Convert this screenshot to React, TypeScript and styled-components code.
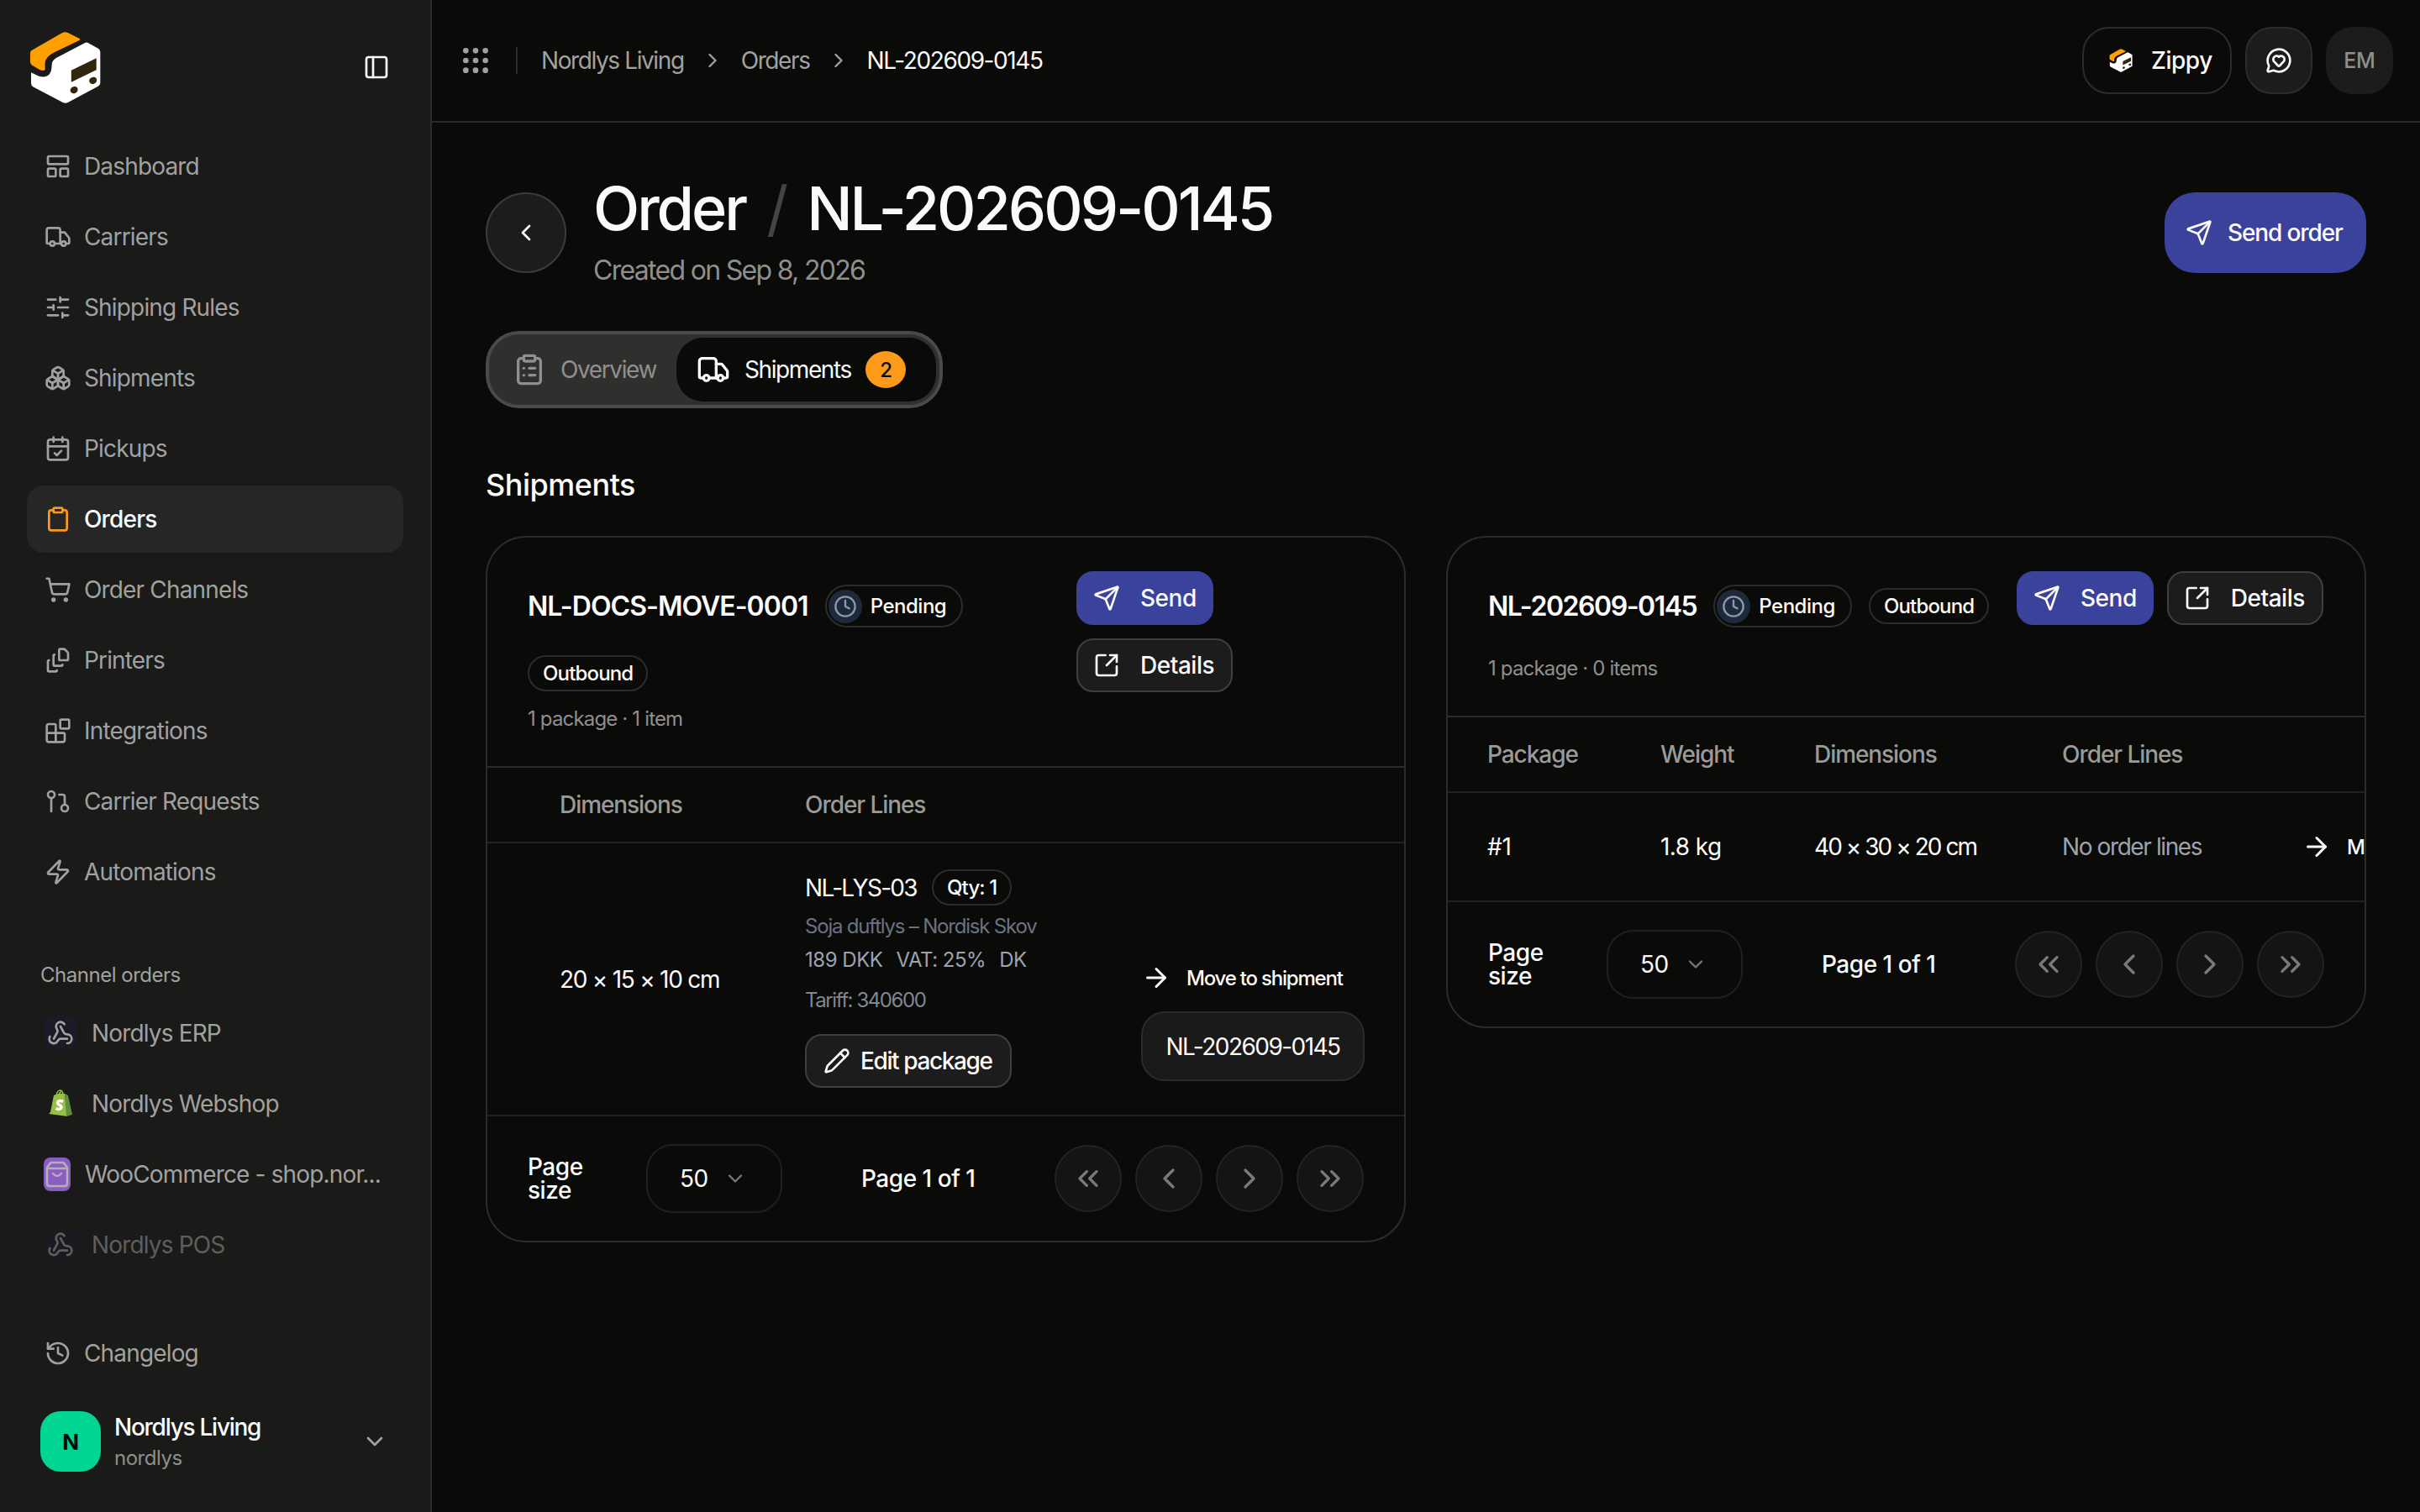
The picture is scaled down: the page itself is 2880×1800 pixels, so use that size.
import React from "react";
import styled, { createGlobalStyle } from "styled-components";
import {
  ArrowRight,
  Blocks,
  Boxes,
  CalendarCheck,
  ChevronDown,
  ChevronLeft,
  ChevronRight,
  ChevronsLeft,
  ChevronsRight,
  Clipboard,
  ClipboardList,
  Clock,
  FileStack,
  GitPullRequest,
  Grip,
  History,
  LayoutPanelTop,
  MessageCircleHeart,
  PanelLeft,
  Pencil,
  Send,
  ShoppingCart,
  SlidersHorizontal,
  SquareArrowOutUpRight,
  Truck,
  Webhook,
  Zap,
} from "lucide-react";

const GlobalStyle = createGlobalStyle`
  * { box-sizing: border-box; }
  html, body { margin: 0; padding: 0; background: #0a0a09; }
  body {
    font-family: Inter, "Liberation Sans", sans-serif;
    letter-spacing: -0.03em;
    color: #fafafa;
    overflow: hidden;
  }
`;

const Shell = styled.div`
  display: flex;
  width: 2880px;
  height: 1800px;
  background: #0a0a09;
`;

/* sidebar */
const Sidebar = styled.aside`
  width: 514px;
  flex: none;
  height: 100%;
  display: flex;
  flex-direction: column;
  background: #1a1a18;
  border-right: 2px solid #2c2c2a;
  padding: 0 32px 48px;
`;

const Brand = styled.div`
  height: 158px;
  display: flex;
  align-items: flex-start;
  justify-content: space-between;
  padding: 37px 16px 0 3px;
  color: #fafafa;
`;

const ToggleWrap = styled.div`
  margin-top: 27px;
  display: flex;
`;

const NavList = styled.nav`
  display: flex;
  flex-direction: column;
  gap: 4px;
`;

const NavItem = styled.div<{ $active?: boolean; $dim?: boolean }>`
  height: 80px;
  display: flex;
  align-items: center;
  gap: 15px;
  padding: 0 20px 0 21px;
  border-radius: 20px;
  font-size: 28px;
  letter-spacing: -0.03em;
  font-weight: ${(p) => (p.$active ? 500 : 400)};
  color: ${(p) => (p.$active ? "#fafafa" : "#a1a1a0")};
  background: ${(p) => (p.$active ? "#262626" : "transparent")};
  opacity: ${(p) => (p.$dim ? 0.5 : 1)};
  white-space: nowrap;
  svg {
    flex: none;
    color: ${(p) => (p.$active ? "#fd9a1a" : "#a1a1a0")};
  }
`;

const ChannelLabel = styled.div`
  margin: 67px 0 13px 16px;
  font-size: 24px;
  line-height: 32px;
  color: #a1a1a0;
`;

const ChannelIcon = styled.span<{ $wide?: boolean }>`
  width: ${(p) => (p.$wide ? 32 : 40)}px;
  height: 40px;
  flex: none;
  display: flex;
  align-items: center;
  justify-content: center;
  border-radius: 10px;
  background: #1b1b28;
`;

const PlainIcon = styled(ChannelIcon)`
  background: transparent;
`;

const ChannelRow = styled(NavItem)`
  padding: 0 20px;
  gap: 17px;
`;

const Ellipsis = styled.span`
  overflow: hidden;
  text-overflow: ellipsis;
`;

const SideBottom = styled.div`
  margin-top: auto;
  display: flex;
  flex-direction: column;
  gap: 29px;
`;

const Account = styled.div`
  display: flex;
  align-items: center;
  padding: 0 16px;
`;

const Avatar = styled.div`
  width: 72px;
  height: 72px;
  flex: none;
  border-radius: 24px;
  background: #00d492;
  color: #0a0a09;
  display: flex;
  align-items: center;
  justify-content: center;
  font-size: 26px;
  font-weight: 700;
`;

const AccountText = styled.div`
  margin-left: 16px;
  flex: 1;
  display: flex;
  flex-direction: column;
  gap: 3px;
`;

const AccountName = styled.div`
  font-size: 28px;
  line-height: 36px;
  font-weight: 500;
  letter-spacing: -0.045em;
`;

const AccountHandle = styled.div`
  font-size: 24px;
  line-height: 32px;
  color: #8f8f8d;
`;

const AccountChevron = styled.div`
  display: flex;
  margin-right: 2px;
  color: #a1a1a0;
`;

/* top bar */
const Content = styled.div`
  flex: 1;
  min-width: 0;
  display: flex;
  flex-direction: column;
`;

const TopBar = styled.header`
  height: 146px;
  flex: none;
  display: flex;
  align-items: center;
  border-bottom: 2px solid #2c2c2a;
  padding: 0 32px;
`;

const GripWrap = styled.div`
  display: flex;
  color: #a1a1a0;
`;

const Divider = styled.div`
  width: 2px;
  height: 32px;
  margin: 0 28px;
  background: #2c2c2a;
`;

const Crumb = styled.span<{ $current?: boolean }>`
  font-size: 28px;
  letter-spacing: -0.05em;
  color: ${(p) => (p.$current ? "#fafafa" : "#a1a1a0")};
`;

const CrumbSep = styled.span`
  display: flex;
  margin: 0 20px;
  color: #a1a1a0;
`;

const TopActions = styled.div`
  margin-left: auto;
  display: flex;
  gap: 16px;
  align-items: center;
`;

const ZippyButton = styled.div`
  width: 178px;
  height: 80px;
  display: flex;
  align-items: center;
  gap: 22px;
  padding-left: 30px;
  border-radius: 32px;
  border: 2px solid #2c2c2a;
  font-size: 28px;
  font-weight: 500;
`;

const SquareButton = styled.div<{ $muted?: boolean }>`
  width: 80px;
  height: 80px;
  display: flex;
  align-items: center;
  justify-content: center;
  border-radius: 32px;
  background: #1c1c1c;
  border: 2px solid ${(p) => (p.$muted ? "#1c1c1c" : "#2c2c2a")};
  font-size: 25px;
  font-weight: 500;
  letter-spacing: -0.01em;
  color: ${(p) => (p.$muted ? "#8f8f8d" : "#fafafa")};
`;

/* page */
const Main = styled.main`
  padding: 62px 64px 0;
`;

const PageHead = styled.div`
  display: flex;
  align-items: center;
`;

const BackButton = styled.div`
  width: 96px;
  height: 96px;
  flex: none;
  display: flex;
  align-items: center;
  justify-content: center;
  border-radius: 50%;
  background: #1c1c1a;
  border: 2px solid #3c3c3a;
  color: #fafafa;
`;

const TitleBlock = styled.div`
  margin-left: 32px;
  flex: 1;
`;

const Title = styled.h1`
  margin: 0;
  display: flex;
  align-items: center;
  font-size: 72px;
  line-height: 80px;
  font-weight: 500;
  letter-spacing: -0.042em;
`;

const Slash = styled.span`
  margin: 0 25px;
  font-weight: 400;
  color: #444442;
`;

const Created = styled.div`
  margin-top: 10px;
  font-size: 32px;
  line-height: 48px;
  letter-spacing: -0.053em;
  color: #8f8f8d;
`;

const PrimaryLarge = styled.div`
  width: 240px;
  height: 96px;
  display: flex;
  align-items: center;
  gap: 18px;
  padding-left: 25px;
  border-radius: 36px;
  background: #3b429c;
  font-size: 28px;
  font-weight: 500;
  letter-spacing: -0.04em;
`;

const Tabs = styled.div`
  margin-top: 48px;
  width: 544px;
  height: 92px;
  display: flex;
  padding: 4px;
  border-radius: 40px;
  border: 4px solid #4a4a48;
  background: #2f2f2e;
`;

const Tab = styled.div<{ $active?: boolean }>`
  display: flex;
  align-items: center;
  gap: 17px;
  padding: 0 24px;
  border-radius: 32px;
  font-size: 28px;
  letter-spacing: -0.05em;
  flex: ${(p) => (p.$active ? 1 : "none")};
  background: ${(p) => (p.$active ? "#0a0a09" : "transparent")};
  color: ${(p) => (p.$active ? "#fafafa" : "#8f8f8d")};
  font-weight: 400;
`;

const TabCount = styled.span`
  width: 48px;
  height: 44px;
  display: flex;
  align-items: center;
  justify-content: center;
  border-radius: 50%;
  background: #fd9a1a;
  color: #0a0a09;
  font-size: 24px;
  font-weight: 500;
`;

const SectionTitle = styled.h2`
  margin: 67px 0 37px;
  font-size: 36px;
  line-height: 48px;
  font-weight: 500;
`;

const CardGrid = styled.div`
  display: grid;
  grid-template-columns: 1fr 1fr;
  gap: 48px;
  align-items: start;
`;

const Card = styled.section`
  min-width: 0;
  border: 2px solid #2c2c2a;
  border-radius: 48px;
  overflow: hidden;
`;

const CardHead = styled.div`
  display: flex;
  gap: 24px;
  padding: 40px 48px;
  border-bottom: 2px solid #2c2c2a;
`;

const CardInfo = styled.div`
  flex: 1;
  min-width: 0;
  padding-top: 16px;
`;

const InfoRow = styled.div`
  display: flex;
  flex-wrap: wrap;
  align-items: center;
  gap: 33px 20px;
`;

const CardTitle = styled.div<{ $tight?: boolean }>`
  font-size: 32px;
  font-weight: 600;
  letter-spacing: ${(p) => (p.$tight ? "-0.046em" : "-0.03em")};
`;

const StatusPill = styled.span`
  height: 51px;
  display: flex;
  align-items: center;
  gap: 10px;
  padding: 0 18px 0 2px;
  border: 2px solid #2c2c2a;
  border-radius: 26px;
  font-size: 24px;
  font-weight: 500;
`;

const StatusDot = styled.span`
  width: 40px;
  height: 40px;
  display: flex;
  align-items: center;
  justify-content: center;
  border-radius: 50%;
  background: #1e2a3a;
  color: #8a9bb0;
`;

const Pill = styled.span`
  height: 43px;
  display: flex;
  align-items: center;
  padding: 0 16px;
  border: 2px solid #2c2c2a;
  border-radius: 22px;
  font-size: 24px;
  font-weight: 500;
  letter-spacing: -0.035em;
`;

const CardMeta = styled.div<{ $top: number }>`
  margin-top: ${(p) => p.$top}px;
  font-size: 24px;
  line-height: 32px;
  letter-spacing: -0.035em;
  color: #8f8f8d;
`;

const CardActions = styled.div<{ $width: number }>`
  width: ${(p) => p.$width}px;
  flex: none;
  display: flex;
  flex-wrap: wrap;
  align-content: flex-start;
  gap: 16px;
`;

const ActionButton = styled.div<{ $primary?: boolean }>`
  height: 64px;
  display: flex;
  align-items: center;
  gap: 24px;
  padding: 0 ${(p) => (p.$primary ? 18 : 20)}px 0 18px;
  border-radius: 20px;
  font-size: 28px;
  font-weight: 500;
  background: ${(p) => (p.$primary ? "#3b429c" : "#1c1c1c")};
  border: 2px solid ${(p) => (p.$primary ? "#3b429c" : "#3f3f3d")};
`;

const TableRow = styled.div<{ $cols: string; $pad: number; $height?: number }>`
  display: grid;
  grid-template-columns: ${(p) => p.$cols};
  padding-left: ${(p) => p.$pad}px;
  height: ${(p) => (p.$height ? `${p.$height}px` : "auto")};
  align-items: center;
  overflow: hidden;
  font-size: 28px;
  border-bottom: 2px solid #222220;
  white-space: nowrap;
`;

const HeadCell = styled.div`
  color: #9a9a98;
  font-weight: 500;
  letter-spacing: -0.038em;
`;

const TextCell = styled.div<{ $spacing: number }>`
  letter-spacing: ${(p) => p.$spacing}em;
`;

const NoLines = styled.div`
  color: #9ca3af;
  letter-spacing: -0.05em;
`;

const OrderCell = styled.div`
  padding: 31px 0 32px;
  display: flex;
  flex-direction: column;
  align-items: flex-start;
`;

const LineHead = styled.div`
  display: flex;
  align-items: center;
  gap: 18px;
  letter-spacing: -0.06em;
`;

const LineName = styled.div`
  margin-top: 9px;
  font-size: 24px;
  line-height: 32px;
  letter-spacing: -0.05em;
  color: #6b7280;
`;

const LinePrice = styled.div`
  margin-top: 8px;
  display: flex;
  gap: 16px;
  font-size: 24px;
  line-height: 32px;
  color: #9ca3af;
`;

const LineTariff = styled.div`
  margin-top: 16px;
  font-size: 24px;
  line-height: 32px;
  letter-spacing: -0.06em;
  color: #7f8794;
`;

const EditButton = styled.div`
  margin-top: 24px;
  height: 64px;
  display: flex;
  align-items: center;
  gap: 12px;
  padding: 0 22px 0 20px;
  border-radius: 20px;
  background: #1c1c1c;
  border: 2px solid #3f3f3d;
  font-weight: 500;
  letter-spacing: -0.05em;
`;

const MoveCell = styled.div<{ $top?: number }>`
  align-self: ${(p) => (p.$top ? "start" : "center")};
  padding-top: ${(p) => p.$top ?? 0}px;
  display: flex;
  flex-direction: column;
  gap: 24px;
`;

const MoveLabel = styled.div`
  height: 32px;
  display: flex;
  align-items: center;
  gap: 18px;
  font-size: 24px;
  font-weight: 500;
  letter-spacing: -0.05em;
`;

const MoveTarget = styled.div`
  width: 266px;
  height: 83px;
  display: flex;
  align-items: center;
  justify-content: center;
  border-radius: 28px;
  background: #1a1a1a;
  border: 2px solid #2c2c2a;
  font-size: 28px;
  letter-spacing: -0.055em;
`;

const CardFoot = styled.div`
  display: flex;
  align-items: center;
  padding: 33px 48px;
  font-size: 28px;
`;

const PageSizeLabel = styled.div`
  width: 70px;
  margin-right: 71px;
  flex: none;
  line-height: 28px;
  font-weight: 500;
`;

const SizeSelect = styled.div`
  width: 162px;
  height: 82px;
  flex: none;
  display: flex;
  align-items: center;
  gap: 18px;
  padding-left: 38px;
  border-radius: 32px;
  border: 2px solid #1f1f1f;
  color: #fafafa;
  svg {
    color: #777775;
  }
`;

const PageLabel = styled.div`
  width: 136px;
  margin: 0 94px;
  flex: none;
  font-weight: 500;
  white-space: nowrap;
`;

const PagerGroup = styled.div`
  display: flex;
  gap: 16px;
`;

const PagerButton = styled.div`
  width: 80px;
  height: 80px;
  display: flex;
  align-items: center;
  justify-content: center;
  border-radius: 50%;
  background: #141414;
  border: 2px solid #232323;
  color: #7a7a78;
`;

const ICON = { size: 32, strokeWidth: 2 };
const PAGER_ICON = { size: 40, strokeWidth: 2 };

const NAV = [
  { label: "Dashboard", Icon: LayoutPanelTop },
  { label: "Carriers", Icon: Truck },
  { label: "Shipping Rules", Icon: SlidersHorizontal },
  { label: "Shipments", Icon: Boxes },
  { label: "Pickups", Icon: CalendarCheck },
  { label: "Orders", Icon: Clipboard, active: true },
  { label: "Order Channels", Icon: ShoppingCart },
  { label: "Printers", Icon: FileStack },
  { label: "Integrations", Icon: Blocks },
  { label: "Carrier Requests", Icon: GitPullRequest },
  { label: "Automations", Icon: Zap },
];

const Logo = ({ width, height }: { width: number; height: number }) => (
  <svg width={width} height={height} viewBox="52 50 256 260" aria-hidden>
    <path
      d="M60 118 L170 55 Q180 50 190 55 L232 76 Q236 79 231 82 L140 126 Q108 142 108 165 L108 188 Q100 193 90 188 L62 172 Q55 168 55 160 L55 128 Q55 121 60 118 Z"
      fill="#ffa000"
    />
    <path
      d="M250 92 Q256 88 262 91 L300 112 Q306 116 306 125 L306 235 Q306 243 298 247 L190 305 Q181 310 172 305 L66 249 Q58 245 58 236 L58 197 L86 211 Q132 222 132 172 Q132 154 148 145 Z"
      fill="#ffffff"
    />
    <path d="M202 190 L292 146 L292 188 L202 232 Z" fill="#33260f" />
    <ellipse cx="212" cy="260" rx="14" ry="12" transform="rotate(-25 212 260)" fill="#33260f" />
    <ellipse cx="280" cy="226" rx="14" ry="12" transform="rotate(-25 280 226)" fill="#33260f" />
  </svg>
);

const ShopifyMark = () => (
  <svg width="30" height="34" viewBox="0 0 30 34" aria-hidden>
    <path d="M3 27 L7 7 Q13 4 20 5 L23 32 L1 29 Z" fill="#95bf47" />
    <path d="M20 5 L24 7 L29 30 L22 32 Z" fill="#5e8e3e" />
    <path d="M10 7 Q11 1 15 1 Q18 2 18 6 M13 6 Q14 3 16 3" fill="none" stroke="#95bf47" strokeWidth="1.4" />
    <path
      d="M18 14.5 Q14 12.5 12 14.5 Q10.5 17 14 18.5 Q17 20 15.5 22.5 Q13 24.5 9.5 22.5"
      fill="none"
      stroke="#fff"
      strokeWidth="3.4"
    />
  </svg>
);

const WooMark = () => (
  <svg width="32" height="40" viewBox="0 0 32 40" aria-hidden>
    <rect width="32" height="40" rx="8" fill="#8c5cc4" />
    <g fill="none" stroke="#b2b0b4" strokeWidth="2.6" strokeLinecap="round" strokeLinejoin="round">
      <path d="M8.5 6 H23.5 L28 12 V31 Q28 34 25 34 H7 Q4 34 4 31 V12 Z" />
      <path d="M4 13 H28" />
      <path d="M11 19 Q16 25 21 19" />
    </g>
  </svg>
);

const Pager = () => (
  <PagerGroup>
    <PagerButton><ChevronsLeft {...PAGER_ICON} /></PagerButton>
    <PagerButton><ChevronLeft {...PAGER_ICON} /></PagerButton>
    <PagerButton><ChevronRight {...PAGER_ICON} /></PagerButton>
    <PagerButton><ChevronsRight {...PAGER_ICON} /></PagerButton>
  </PagerGroup>
);

const Footer = () => (
  <CardFoot>
    <PageSizeLabel>Page size</PageSizeLabel>
    <SizeSelect>
      50
      <ChevronDown size={28} strokeWidth={2} />
    </SizeSelect>
    <PageLabel>Page 1 of 1</PageLabel>
    <Pager />
  </CardFoot>
);

const Actions = ({ width }: { width: number }) => (
  <CardActions $width={width}>
    <ActionButton $primary>
      <Send {...ICON} />
      Send
    </ActionButton>
    <ActionButton>
      <SquareArrowOutUpRight {...ICON} />
      Details
    </ActionButton>
  </CardActions>
);

const Status = () => (
  <StatusPill>
    <StatusDot><Clock size={28} strokeWidth={2} /></StatusDot>
    Pending
  </StatusPill>
);

const Move = ({ top, children }: { top?: number; children?: React.ReactNode }) => (
  <MoveCell $top={top}>
    <MoveLabel>
      <ArrowRight size={36} strokeWidth={2} />
      Move to shipment
    </MoveLabel>
    {children}
  </MoveCell>
);

const App = () => {
  const firstCols = "292px 400px 266px";
  const secondCols = "206px 183px 295px 285px 400px";
  return (
    <Shell>
      <GlobalStyle />
      <Sidebar>
        <Brand>
          <Logo width={85} height={87} />
          <ToggleWrap><PanelLeft {...ICON} /></ToggleWrap>
        </Brand>
        <NavList>
          {NAV.map(({ label, Icon, active }) => (
            <NavItem key={label} $active={active}>
              <Icon {...ICON} />
              {label}
            </NavItem>
          ))}
        </NavList>
        <ChannelLabel>Channel orders</ChannelLabel>
        <NavList>
          <ChannelRow><ChannelIcon><Webhook {...ICON} /></ChannelIcon>Nordlys ERP</ChannelRow>
          <ChannelRow><PlainIcon><ShopifyMark /></PlainIcon>Nordlys Webshop</ChannelRow>
          <ChannelRow><PlainIcon $wide><WooMark /></PlainIcon><Ellipsis>WooCommerce - shop.nor...</Ellipsis></ChannelRow>
          <ChannelRow $dim><ChannelIcon><Webhook {...ICON} /></ChannelIcon>Nordlys POS</ChannelRow>
        </NavList>
        <SideBottom>
          <NavItem><History {...ICON} />Changelog</NavItem>
          <Account>
            <Avatar>N</Avatar>
            <AccountText>
              <AccountName>Nordlys Living</AccountName>
              <AccountHandle>nordlys</AccountHandle>
            </AccountText>
            <AccountChevron><ChevronDown size={32} strokeWidth={2} /></AccountChevron>
          </Account>
        </SideBottom>
      </Sidebar>
      <Content>
        <TopBar>
          <GripWrap><Grip size={40} strokeWidth={2} /></GripWrap>
          <Divider />
          <Crumb>Nordlys Living</Crumb>
          <CrumbSep><ChevronRight size={28} strokeWidth={2} /></CrumbSep>
          <Crumb>Orders</Crumb>
          <CrumbSep><ChevronRight size={28} strokeWidth={2} /></CrumbSep>
          <Crumb $current>NL-202609-0145</Crumb>
          <TopActions>
            <ZippyButton>
              <Logo width={28} height={28} />
              Zippy
            </ZippyButton>
            <SquareButton><MessageCircleHeart {...ICON} /></SquareButton>
            <SquareButton $muted>EM</SquareButton>
          </TopActions>
        </TopBar>
        <Main>
          <PageHead>
            <BackButton><ChevronLeft {...ICON} /></BackButton>
            <TitleBlock>
              <Title>
                Order
                <Slash>/</Slash>
                NL-202609-0145
              </Title>
              <Created>Created on Sep 8, 2026</Created>
            </TitleBlock>
            <PrimaryLarge>
              <Send {...ICON} />
              Send order
            </PrimaryLarge>
          </PageHead>
          <Tabs>
            <Tab>
              <ClipboardList size={40} strokeWidth={2} />
              Overview
            </Tab>
            <Tab $active>
              <Truck size={40} strokeWidth={2} />
              Shipments
              <TabCount>2</TabCount>
            </Tab>
          </Tabs>
          <SectionTitle>Shipments</SectionTitle>
          <CardGrid>
            <Card>
              <CardHead>
                <CardInfo>
                  <InfoRow>
                    <CardTitle>NL-DOCS-MOVE-0001</CardTitle>
                    <Status />
                    <Pill>Outbound</Pill>
                  </InfoRow>
                  <CardMeta $top={17}>1 package · 1 item</CardMeta>
                </CardInfo>
                <Actions width={342} />
              </CardHead>
              <TableRow $cols={firstCols} $pad={86} $height={90}>
                <HeadCell>Dimensions</HeadCell>
                <HeadCell>Order Lines</HeadCell>
              </TableRow>
              <TableRow $cols={firstCols} $pad={86}>
                <TextCell $spacing={-0.045}>20 × 15 × 10 cm</TextCell>
                <OrderCell>
                  <LineHead>
                    NL-LYS-03
                    <Pill>Qty: 1</Pill>
                  </LineHead>
                  <LineName>Soja duftlys – Nordisk Skov</LineName>
                  <LinePrice>
                    <span>189 DKK</span>
                    <span>VAT: 25%</span>
                    <span>DK</span>
                  </LinePrice>
                  <LineTariff>Tariff: 340600</LineTariff>
                  <EditButton>
                    <Pencil {...ICON} />
                    Edit package
                  </EditButton>
                </OrderCell>
                <Move top={144}>
                  <MoveTarget>NL-202609-0145</MoveTarget>
                </Move>
              </TableRow>
              <Footer />
            </Card>
            <Card>
              <CardHead>
                <CardInfo>
                  <InfoRow>
                    <CardTitle $tight>NL-202609-0145</CardTitle>
                    <Status />
                    <Pill>Outbound</Pill>
                  </InfoRow>
                  <CardMeta $top={33}>1 package · 0 items</CardMeta>
                </CardInfo>
                <Actions width={366} />
              </CardHead>
              <TableRow $cols={secondCols} $pad={47} $height={90}>
                <HeadCell>Package</HeadCell>
                <HeadCell>Weight</HeadCell>
                <HeadCell>Dimensions</HeadCell>
                <HeadCell>Order Lines</HeadCell>
              </TableRow>
              <TableRow $cols={secondCols} $pad={47} $height={130}>
                <TextCell $spacing={-0.01}>#1</TextCell>
                <TextCell $spacing={-0.02}>1.8 kg</TextCell>
                <TextCell $spacing={-0.07}>40 × 30 × 20 cm</TextCell>
                <NoLines>No order lines</NoLines>
                <Move />
              </TableRow>
              <Footer />
            </Card>
          </CardGrid>
        </Main>
      </Content>
    </Shell>
  );
};

export default App;
